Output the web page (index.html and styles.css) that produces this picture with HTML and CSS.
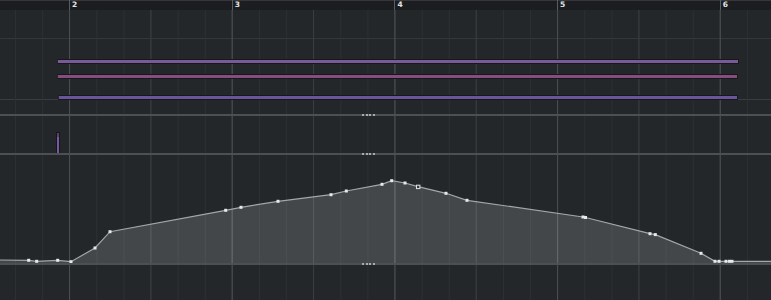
FILE: index.html
```html
<!DOCTYPE html>
<html lang="en">

<head>
    <meta charset="UTF-8">
    <title>Key Editor</title>
    <link rel="stylesheet" href="styles.css">
</head>

<body>
    <div class="editor">
        <!-- bar ruler -->
        <div class="ruler">
            <div class="bar"><span>2</span></div>
            <div class="bar"><span>3</span></div>
            <div class="bar"><span>4</span></div>
            <div class="bar"><span>5</span></div>
            <div class="bar"><span>6</span></div>
        </div>

        <!-- note lane -->
        <div class="lane grid notes">
            <div class="note violet" style="top: 49px; left: 57px; width: 680px;"></div>
            <div class="note pink" style="top: 64px; left: 57px; width: 679px;"></div>
            <div class="note blue" style="top: 85px; left: 58px; width: 678px;"></div>
        </div>

        <div class="divider"><div class="grip"><i></i><i></i><i></i><i></i></div></div>

        <!-- velocity lane -->
        <div class="lane grid velocity">
            <div class="vel" style="left: 56px; height: 20px;"></div>
        </div>

        <div class="divider"><div class="grip"><i></i><i></i><i></i><i></i></div></div>

        <!-- controller lane -->
        <div class="lane grid controller">
            <svg class="curve" width="771" height="108" viewBox="0 155 771 108">
                <polygon class="area" points="0,263 0,260 28.7,260.3 36.7,261.3 57.7,260.3 71,261.7 95,248 110,231.7 225.7,210.3 241,207.3 278,201.3 331,194.7 346.3,191 382,184.3 391.7,180.7 405,183 418,186.7 446,193.3 467,200.3 583,217 585.5,217.5 650,233.7 655.3,234.6 701,253.3 715,261.3 732,261.3 771,261.3 771,263" />
                <polyline class="line" points="0,260 28.7,260.3 36.7,261.3 57.7,260.3 71,261.7 95,248 110,231.7 225.7,210.3 241,207.3 278,201.3 331,194.7 346.3,191 382,184.3 391.7,180.7 405,183 418,186.7 446,193.3 467,200.3 583,217 585.5,217.5 650,233.7 655.3,234.6 701,253.3 715,261.3 732,261.3 771,261.3" />
                <g class="pts">
                    <rect x="27.2" y="258.8" width="3" height="3" />
                    <rect x="35.2" y="259.8" width="3" height="3" />
                    <rect x="56.2" y="258.8" width="3" height="3" />
                    <rect x="69.5" y="260.2" width="3" height="3" />
                    <rect x="93.5" y="246.5" width="3" height="3" />
                    <rect x="108.5" y="230.2" width="3" height="3" />
                    <rect x="224.2" y="208.8" width="3" height="3" />
                    <rect x="239.5" y="205.8" width="3" height="3" />
                    <rect x="276.5" y="199.8" width="3" height="3" />
                    <rect x="329.5" y="193.2" width="3" height="3" />
                    <rect x="344.8" y="189.5" width="3" height="3" />
                    <rect x="380.5" y="182.8" width="3" height="3" />
                    <rect x="390.2" y="179.2" width="3" height="3" />
                    <rect x="403.5" y="181.5" width="3" height="3" />
                    <rect x="444.5" y="191.8" width="3" height="3" />
                    <rect x="465.5" y="198.8" width="3" height="3" />
                    <rect x="581.5" y="215.5" width="3" height="3" />
                    <rect x="584" y="216" width="3" height="3" />
                    <rect x="648.5" y="232.2" width="3" height="3" />
                    <rect x="653.8" y="233.1" width="3" height="3" />
                    <rect x="699.5" y="251.8" width="3" height="3" />
                    <rect x="713.5" y="259.8" width="3" height="3" />
                    <rect x="717.5" y="259.8" width="3" height="3" />
                    <rect x="724.5" y="259.8" width="3" height="3" />
                    <rect x="728" y="259.8" width="3" height="3" />
                    <rect x="730.5" y="259.8" width="3" height="3" />
                </g>
                <rect class="sel" x="416.5" y="185.2" width="3.4" height="3.4" />
            </svg>
        </div>

        <div class="divider"><div class="grip"><i></i><i></i><i></i><i></i></div></div>

        <div class="lane grid rest"></div>
    </div>
</body>

</html>
```

FILE: styles.css
```css
body {
    margin: 0;
    background-color: #24272a;
    font-family: 'DejaVu Sans', sans-serif;
    overflow: hidden;
}

.editor {
    width: 771px;
    height: 300px;
    display: flex;
    flex-direction: column;
    overflow: hidden;
}

/* ruler */
.ruler {
    height: 10px;
    flex-shrink: 0;
    display: flex;
    padding-left: 69px;
    background-color: #1c1d20;
    background-image: linear-gradient(to bottom, #35373a 1px, transparent 1px);
    background-size: 13.56px 10px;
    background-position: 15px 0;
}

.bar {
    width: 162.7px;
    flex-shrink: 0;
    box-sizing: border-box;
    border-left: 1px solid #5a5d60;
}

.bar span {
    display: block;
    padding-left: 2px;
    padding-top: 1px;
    color: #e4e4e4;
    font-size: 7.5px;
    font-weight: bold;
    line-height: 8px;
}

/* lanes */
.lane {
    position: relative;
    flex-shrink: 0;
}

.grid {
    background-color: #24272a;
    background-image:
        linear-gradient(to right, #4a4d50 1px, transparent 1px),
        linear-gradient(to right, #3a3d40 1px, transparent 1px),
        linear-gradient(to right, #2d3033 1px, transparent 1px);
    background-size: 162.7px 100%, 81.35px 100%, 27.117px 100%;
    background-position: 69px 0, 69px 0, 15px 0;
}

.notes {
    height: 104px;
    background-image:
        linear-gradient(to right, #4a4d50 1px, transparent 1px),
        linear-gradient(to right, #3a3d40 1px, transparent 1px),
        linear-gradient(to right, #2d3033 1px, transparent 1px),
        linear-gradient(to bottom, transparent 28px, #34373a 28px, #34373a 29px, transparent 29px, transparent 89px, #3a3d40 89px, #3a3d40 90px, transparent 90px);
    background-size: 162.7px 100%, 81.35px 100%, 27.117px 100%, 100% 100%;
    background-position: 69px 0, 69px 0, 15px 0, 0 0;
}

.note {
    position: absolute;
    height: 3px;
    border: 1px solid #18171c;
    border-left-color: #2a2530;
}

.note.violet {
    background-color: #775a96;
}

.note.pink {
    background-color: #864e80;
}

.note.blue {
    background-color: #6a559b;
}

.velocity {
    height: 37px;
}

.vel {
    position: absolute;
    bottom: 0;
    width: 2px;
    box-sizing: content-box;
    border: 1px solid #17161b;
    border-bottom: none;
    background: linear-gradient(to bottom, #5b3f70 4px, #7658a4 4px);
}

.controller {
    height: 108px;
}

.curve {
    display: block;
}

.area {
    fill: rgba(255, 255, 255, 0.15);
}

.line {
    fill: none;
    stroke: #a4a6a8;
    stroke-width: 1.2;
}

.pts rect {
    fill: #e8e8e8;
}

.sel {
    fill: #3a3d40;
    stroke: #e0e0e0;
    stroke-width: 1;
}

.rest {
    flex-grow: 1;
}

/* lane dividers */
.divider {
    height: 2px;
    flex-shrink: 0;
    background-color: #4d5053;
    display: flex;
    align-items: center;
}

.grip {
    display: flex;
    gap: 1.5px;
    margin-left: 362px;
}

.grip i {
    width: 2px;
    height: 2px;
    background-color: #a8aaac;
}
```
